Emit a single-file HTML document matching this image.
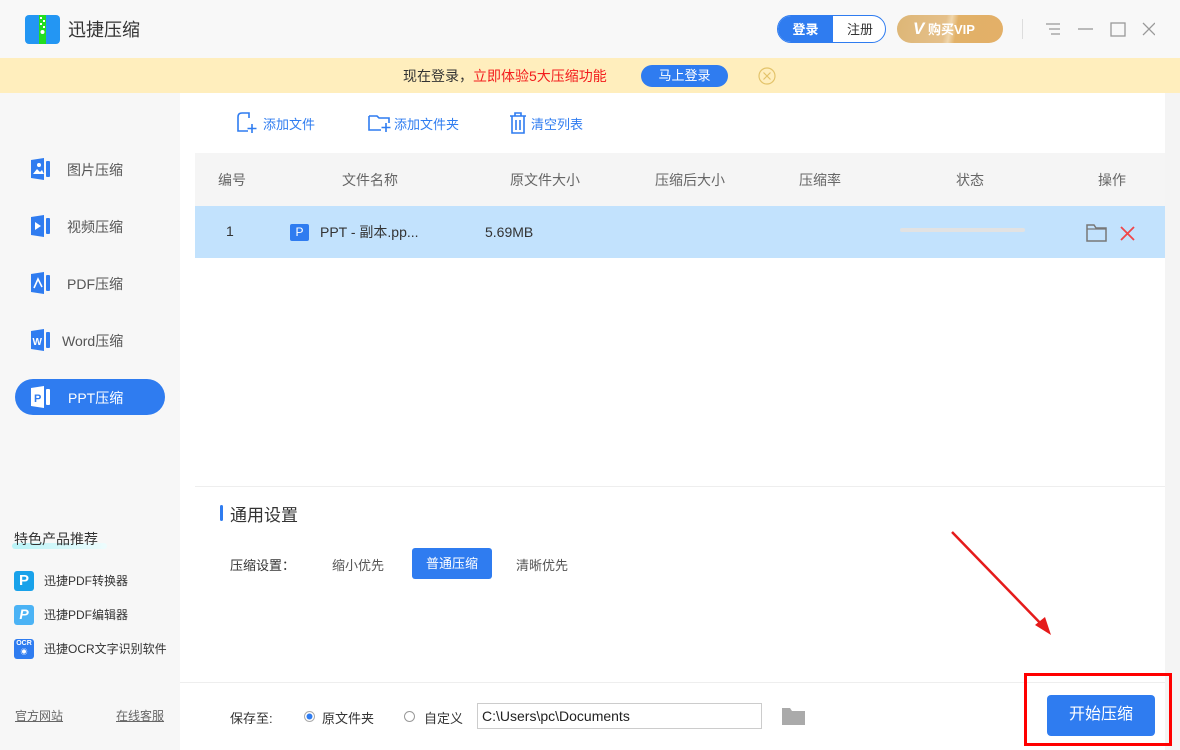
<!DOCTYPE html>
<html><head><meta charset="utf-8"><style>
*{margin:0;padding:0;box-sizing:border-box}
body{width:1180px;height:750px;overflow:hidden;position:relative;background:#f7f7f7;font-family:"Liberation Sans","Noto Sans CJK SC",sans-serif;color:#333;font-size:14px}
.a{position:absolute}
.top{left:0;top:0;width:1180px;height:58px;background:#f8f8f8}
.banner{left:0;top:58px;width:1180px;height:35px;background:#ffeebd}
.main{left:180px;top:93px;width:985px;height:657px;background:#fff}
.nav{left:30px;font-size:14px;color:#555}
.th{top:153px;left:195px;width:970px;height:53px;background:#f5f5f5}
.row{top:206px;left:195px;width:970px;height:52px;background:#c2e2fd}
.hd{top:170px;font-size:14px;color:#666}
</style></head><body>
<div class="a top"></div>
<svg class="a" style="left:25px;top:15px" width="35" height="29" viewBox="0 0 35 29"><rect x="0" y="0" width="35" height="29" rx="4" fill="#2396f3"/><rect x="14" y="0" width="7" height="29" fill="#22dd22"/><rect x="15" y="2" width="2" height="2" fill="#fff"/><rect x="18" y="5" width="2" height="2" fill="#fff"/><rect x="15" y="8" width="2" height="2" fill="#fff"/><rect x="18" y="11" width="2" height="2" fill="#fff"/><circle cx="17.5" cy="17" r="2" fill="#fff"/></svg>
<div class="a" style="left:68px;top:16px;font-size:18px;color:#333">迅捷压缩</div>
<div class="a" style="left:777px;top:15px;width:109px;height:28px;border:1px solid #2f7cf0;border-radius:14px;background:#fff;overflow:hidden">
<div style="position:absolute;left:0;top:0;width:55px;height:28px;background:#2f7cf0;color:#fff;font-size:13px;text-align:center;line-height:27px;font-weight:bold">登录</div>
<div style="position:absolute;left:55px;top:0;width:54px;text-align:center;line-height:27px;font-size:13px;color:#333">注册</div></div>
<div class="a" style="left:897px;top:15px;width:106px;height:28px;border-radius:14px;background:linear-gradient(100deg,#ddb676 0%,#e5c08a 45%,#f0d6ac 50%,#e2b168 56%,#e3b068 100%);color:#fff;font-size:13px;font-weight:bold;line-height:28px;padding-left:16px"><span style="font-style:italic;font-size:17px">V</span> 购买VIP</div>
<div class="a" style="left:1022px;top:19px;width:1px;height:20px;background:#ddd"></div>
<svg class="a" style="left:1045px;top:20px" width="110" height="18" viewBox="0 0 110 18"><g stroke="#999" stroke-width="1.3" fill="none"><path d="M1 4h14M4 9h11M6 14h9"/><path d="M33 9h15"/><rect x="66" y="3" width="14" height="13"/><path d="M98 3l12 12M110 3L98 15"/></g></svg>
<div class="a banner"></div>
<div class="a" style="left:403px;top:66px;font-size:14px;color:#333">现在登录，<span style="color:#f31d1d">立即体验5大压缩功能</span></div>
<div class="a" style="left:641px;top:65px;width:87px;height:22px;border-radius:11px;background:#2f7cf0;color:#fff;font-size:13px;text-align:center;line-height:22px">马上登录</div>
<svg class="a" style="left:758px;top:67px" width="18" height="18"><circle cx="9" cy="9" r="8" stroke="#e3c36a" fill="none" stroke-width="1.2"/><path d="M5.5 5.5l7 7M12.5 5.5l-7 7" stroke="#e3c36a" stroke-width="1.2"/></svg>
<div class="a main"></div>
<div class="a" style="left:1165px;top:93px;width:15px;height:657px;background:#f4f4f4"></div>
<svg class="a" style="left:31px;top:158px" width="20" height="22"><path d="M0 2l13-2v22L0 20z" fill="#2f7cf0"/><rect x="15" y="3" width="4" height="16" rx="1" fill="#2f7cf0"/><circle cx="8" cy="7" r="2" fill="#fff"/><path d="M2 16l4-5 3 3 2-2 2 4z" fill="#fff"/></svg>
<div class="a nav" style="left:67px;top:160px">图片压缩</div>
<svg class="a" style="left:31px;top:215px" width="20" height="22"><path d="M0 2l13-2v22L0 20z" fill="#2f7cf0"/><rect x="15" y="3" width="4" height="16" rx="1" fill="#2f7cf0"/><path d="M4 7l6 4-6 4z" fill="#fff"/></svg>
<div class="a nav" style="left:67px;top:217px">视频压缩</div>
<svg class="a" style="left:31px;top:272px" width="20" height="22"><path d="M0 2l13-2v22L0 20z" fill="#2f7cf0"/><rect x="15" y="3" width="4" height="16" rx="1" fill="#2f7cf0"/><path d="M3 16l4-9 4 8" stroke="#fff" stroke-width="1.6" fill="none"/></svg>
<div class="a nav" style="left:67px;top:274px">PDF压缩</div>
<svg class="a" style="left:31px;top:329px" width="20" height="22"><path d="M0 2l13-2v22L0 20z" fill="#2f7cf0"/><rect x="15" y="3" width="4" height="16" rx="1" fill="#2f7cf0"/><text x="1.5" y="16" font-size="10" font-weight="bold" fill="#fff" font-family="Liberation Sans">W</text></svg>
<div class="a nav" style="left:62px;top:331px">Word压缩</div>
<div class="a" style="left:15px;top:379px;width:150px;height:36px;border-radius:18px;background:#2f7cf0"></div>
<svg class="a" style="left:31px;top:386px" width="20" height="22"><path d="M0 2l13-2v22L0 20z" fill="#fff"/><rect x="15" y="3" width="4" height="16" rx="1" fill="#fff"/><text x="3" y="16" font-size="11" font-weight="bold" fill="#2f7cf0" font-family="Liberation Sans">P</text></svg>
<div class="a" style="left:68px;top:388px;color:#fff;font-size:14px">PPT压缩</div>
<div class="a" style="left:12px;top:543px;width:95px;height:6px;border-radius:3px;background:linear-gradient(90deg,#b9f3f7,#eefcfd)"></div>
<div class="a" style="left:14px;top:529px;font-size:14px;color:#333">特色产品推荐</div>
<div class="a" style="left:14px;top:571px;width:20px;height:20px;border-radius:3px;background:#19a2ea;color:#fff;font-weight:bold;font-size:15px;text-align:center;line-height:20px">P</div>
<div class="a" style="left:44px;top:572px;font-size:12px;color:#333">迅捷PDF转换器</div>
<div class="a" style="left:14px;top:605px;width:20px;height:20px;border-radius:3px;background:#4bb3f5;color:#fff;font-weight:bold;font-size:14px;text-align:center;line-height:18px;font-style:italic">P</div>
<div class="a" style="left:44px;top:606px;font-size:12px;color:#333">迅捷PDF编辑器</div>
<div class="a" style="left:14px;top:639px;width:20px;height:20px;border-radius:3px;background:#2f7cf0;color:#fff;font-weight:bold;font-size:7px;text-align:center;line-height:9px">OCR<br>◉</div>
<div class="a" style="left:44px;top:640px;font-size:12px;color:#333">迅捷OCR文字识别软件</div>
<div class="a" style="left:15px;top:707px;font-size:12px;color:#666;text-decoration:underline">官方网站</div>
<div class="a" style="left:116px;top:707px;font-size:12px;color:#666;text-decoration:underline">在线客服</div>
<svg class="a" style="left:237px;top:112px" width="20" height="22" viewBox="0 0 20 22"><path d="M9 1H5Q1 1 1 5v14h10M9 1h3v5" stroke="#2f7cf0" stroke-width="1.6" fill="none"/><path d="M15 12v9M10.5 16.5h9" stroke="#2f7cf0" stroke-width="1.6"/></svg>
<div class="a" style="left:263px;top:114px;font-size:13px;color:#2f7cf0">添加文件</div>
<svg class="a" style="left:368px;top:113px" width="24" height="20"><path d="M1 3h8l2 2h10v5M1 3v14h12" stroke="#2f7cf0" stroke-width="1.6" fill="none"/><path d="M18 10v9M13.5 14.5h9" stroke="#2f7cf0" stroke-width="1.6"/></svg>
<div class="a" style="left:394px;top:114px;font-size:13px;color:#2f7cf0">添加文件夹</div>
<svg class="a" style="left:509px;top:112px" width="18" height="22"><path d="M1 4h16M6 4V1h6v3M3 4v17h12V4M7 8v10M11 8v10" stroke="#2f7cf0" stroke-width="1.6" fill="none"/></svg>
<div class="a" style="left:531px;top:114px;font-size:13px;color:#2f7cf0">清空列表</div>
<div class="a th"></div>
<div class="a hd" style="left:218px">编号</div>
<div class="a hd" style="left:342px">文件名称</div>
<div class="a hd" style="left:510px">原文件大小</div>
<div class="a hd" style="left:655px">压缩后大小</div>
<div class="a hd" style="left:799px">压缩率</div>
<div class="a hd" style="left:956px">状态</div>
<div class="a hd" style="left:1098px">操作</div>
<div class="a row"></div>
<div class="a" style="left:226px;top:223px;font-size:14px">1</div>
<div class="a" style="left:290px;top:224px;width:19px;height:17px;border-radius:2px;background:#2f7cf0;color:#fff;font-size:12px;text-align:center;line-height:17px">P</div>
<div class="a" style="left:320px;top:222px;font-size:14px">PPT - 副本.pp...</div>
<div class="a" style="left:485px;top:224px;font-size:14px">5.69MB</div>
<div class="a" style="left:900px;top:228px;width:125px;height:4px;border-radius:2px;background:#e2e2e2"></div>
<svg class="a" style="left:1086px;top:223px" width="21" height="19"><path d="M1 2h7l2 3h10v13H1z" stroke="#777" stroke-width="1.5" fill="none"/><path d="M1 6h19" stroke="#777" stroke-width="1.2"/></svg>
<svg class="a" style="left:1120px;top:226px" width="15" height="15"><path d="M1 1l13 13M14 1L1 14" stroke="#f0464a" stroke-width="1.8"/></svg>
<div class="a" style="left:195px;top:486px;width:970px;height:1px;background:#eee"></div>
<div class="a" style="left:220px;top:505px;width:3px;height:16px;border-radius:2px;background:#2f7cf0"></div>
<div class="a" style="left:230px;top:501px;font-size:17px;color:#333">通用设置</div>
<div class="a" style="left:230px;top:555px;font-size:13px;color:#333">压缩设置：</div>
<div class="a" style="left:332px;top:555px;font-size:13px;color:#555">缩小优先</div>
<div class="a" style="left:412px;top:548px;width:80px;height:31px;border-radius:3px;background:#2f7cf0;color:#fff;font-size:13px;text-align:center;line-height:31px">普通压缩</div>
<div class="a" style="left:516px;top:555px;font-size:13px;color:#555">清晰优先</div>
<div class="a" style="left:180px;top:682px;width:985px;height:1px;background:#eee"></div>
<div class="a" style="left:230px;top:708px;font-size:13px;color:#333">保存至:</div>
<svg class="a" style="left:304px;top:711px" width="11" height="11"><circle cx="5.5" cy="5.5" r="5" fill="#fff" stroke="#aaa"/><circle cx="5.5" cy="5.5" r="3" fill="#2f7cf0"/></svg>
<div class="a" style="left:322px;top:708px;font-size:13px;color:#333">原文件夹</div>
<svg class="a" style="left:404px;top:711px" width="11" height="11"><circle cx="5.5" cy="5.5" r="5" fill="#fff" stroke="#999"/></svg>
<div class="a" style="left:424px;top:708px;font-size:13px;color:#333">自定义</div>
<div class="a" style="left:477px;top:703px;width:285px;height:26px;border:1px solid #ccc;background:#fff;font-size:14px;line-height:24px;padding-left:4px;color:#222">C:\Users\pc\Documents</div>
<svg class="a" style="left:782px;top:707px" width="23" height="18"><path d="M0 1h8l2 3h13v14H0z" fill="#aaa"/></svg>
<div class="a" style="left:1047px;top:695px;width:108px;height:41px;border-radius:4px;background:#2f7cf0;color:#fff;font-size:16px;text-align:center;line-height:40px">开始压缩</div>
<div class="a" style="left:1024px;top:673px;width:148px;height:73px;border:3px solid #f00"></div>
<svg class="a" style="left:945px;top:525px" width="115" height="120"><path d="M7 7L100 103" stroke="#e51b1b" stroke-width="2.5"/><path d="M106 110L90 100 100 92z" fill="#e51b1b"/></svg>
</body></html>
